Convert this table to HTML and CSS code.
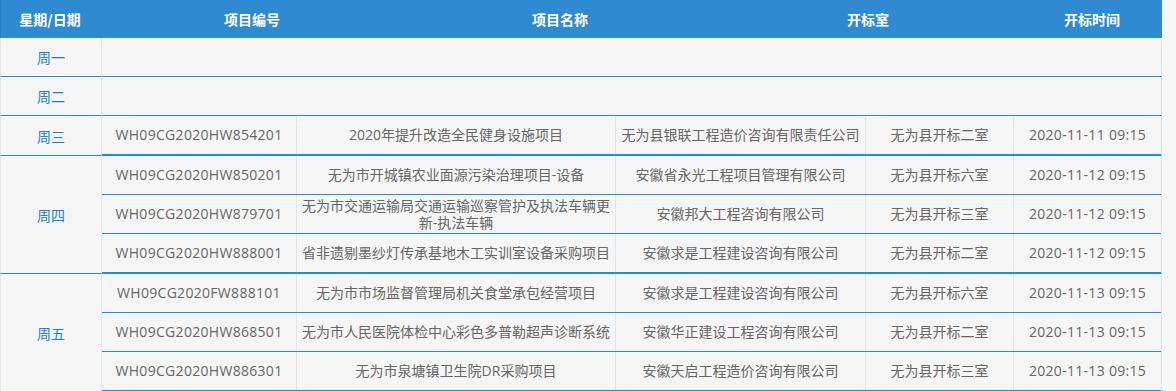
FILE: index.html
```html
<!DOCTYPE html>
<html lang="zh-CN">
<head>
<meta charset="utf-8">
<title>开标安排</title>
<link rel="stylesheet" href="styles.css">
</head>
<body>
<div class="sheet">
  <div class="head">
    <div class="hcell">星期/日期</div>
    <div class="hcell">项目编号</div>
    <div class="hcell">项目名称</div>
    <div class="hcell">开标室</div>
    <div class="hcell">开标时间</div>
  </div>

  <div class="group">
    <div class="day">周一</div>
    <div class="rows"></div>
  </div>

  <div class="group">
    <div class="day">周二</div>
    <div class="rows"></div>
  </div>

  <div class="group">
    <div class="day">周三</div>
    <div class="rows">
      <div class="row">
        <div class="cell code">WH09CG2020HW854201</div>
        <div class="cell">2020年提升改造全民健身设施项目</div>
        <div class="cell">无为县银联工程造价咨询有限责任公司</div>
        <div class="cell">无为县开标二室</div>
        <div class="cell code">2020-11-11 09:15</div>
      </div>
    </div>
  </div>

  <div class="group">
    <div class="day">周四</div>
    <div class="rows">
      <div class="row">
        <div class="cell code">WH09CG2020HW850201</div>
        <div class="cell">无为市开城镇农业面源污染治理项目-设备</div>
        <div class="cell">安徽省永光工程项目管理有限公司</div>
        <div class="cell">无为县开标六室</div>
        <div class="cell code">2020-11-12 09:15</div>
      </div>
      <div class="row">
        <div class="cell code">WH09CG2020HW879701</div>
        <div class="cell">无为市交通运输局交通运输巡察管护及执法车辆更新-执法车辆</div>
        <div class="cell">安徽邦大工程咨询有限公司</div>
        <div class="cell">无为县开标三室</div>
        <div class="cell code">2020-11-12 09:15</div>
      </div>
      <div class="row">
        <div class="cell code">WH09CG2020HW888001</div>
        <div class="cell">省非遗剔墨纱灯传承基地木工实训室设备采购项目</div>
        <div class="cell">安徽求是工程建设咨询有限公司</div>
        <div class="cell">无为县开标二室</div>
        <div class="cell code">2020-11-12 09:15</div>
      </div>
    </div>
  </div>

  <div class="group">
    <div class="day">周五</div>
    <div class="rows">
      <div class="row">
        <div class="cell code">WH09CG2020FW888101</div>
        <div class="cell">无为市市场监督管理局机关食堂承包经营项目</div>
        <div class="cell">安徽求是工程建设咨询有限公司</div>
        <div class="cell">无为县开标六室</div>
        <div class="cell code">2020-11-13 09:15</div>
      </div>
      <div class="row">
        <div class="cell code">WH09CG2020HW868501</div>
        <div class="cell">无为市人民医院体检中心彩色多普勒超声诊断系统</div>
        <div class="cell">安徽华正建设工程咨询有限公司</div>
        <div class="cell">无为县开标二室</div>
        <div class="cell code">2020-11-13 09:15</div>
      </div>
      <div class="row">
        <div class="cell code">WH09CG2020HW886301</div>
        <div class="cell">无为市泉塘镇卫生院DR采购项目</div>
        <div class="cell">安徽天启工程造价咨询有限公司</div>
        <div class="cell">无为县开标三室</div>
        <div class="cell code">2020-11-13 09:15</div>
      </div>
    </div>
  </div>
</div>
</body>
</html>
```

FILE: styles.css
```css
html, body {
  margin: 0;
  padding: 0;
  background: #f7f7f7;
}

body {
  font-family: "Open Sans", "Noto Sans CJK SC", sans-serif;
  font-size: 14px;
  color: #666666;
}

.sheet {
  width: 1162px;
}

.head {
  display: grid;
  grid-template-columns: 98px 306px 310px 306px 142px;
  height: 38px;
  background: #2f8ad1;
  border-left: 1px solid #2a7dbe;
  box-sizing: border-box;
  color: #ffffff;
  font-weight: bold;
  font-family: "Noto Sans CJK SC", sans-serif;
}

.hcell {
  display: flex;
  align-items: center;
  justify-content: center;
}

.group {
  display: flex;
  background: #f5f5f5;
}

.day {
  width: 102px;
  flex: none;
  box-sizing: border-box;
  border-left: 1px solid #e2e5e9;
  border-right: 1px solid #dde4ec;
  border-bottom: 1px solid #1e8ae8;
  display: flex;
  align-items: center;
  justify-content: center;
  color: #1b7fd3;
  font-family: "Noto Sans CJK SC", sans-serif;
}

.rows {
  flex: 1;
  min-height: 38px;
  border-bottom: 1px solid #1e8ae8;
  border-right: 1px solid #dfe4ea;
}

.row {
  display: grid;
  grid-template-columns: 195px 319px 250px 148px 147px;
  border-bottom: 1px solid #1e8ae8;
}

.cell {
  height: 38px;
  box-sizing: border-box;
  padding: 0 5px;
  border-right: 1px solid #dde4ec;
  display: flex;
  align-items: center;
  justify-content: center;
  text-align: center;
  line-height: 1.25;
}

.cell:last-child {
  border-right: none;
}

.code {
  letter-spacing: 0.3px;
}
```
